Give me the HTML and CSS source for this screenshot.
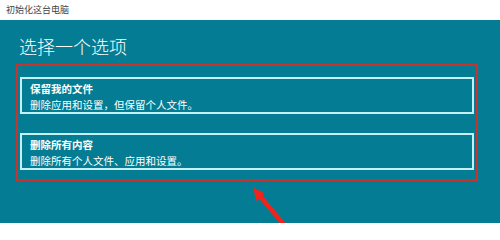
FILE: index.html
```html
<!DOCTYPE html>
<html lang="zh-CN">
<head>
<meta charset="utf-8">
<title>初始化这台电脑</title>
<link rel="stylesheet" href="styles.css">
</head>
<body>
<div class="window">
  <div class="titlebar">初始化这台电脑</div>
  <div class="main">
    <h1 class="heading">选择一个选项</h1>
    <div class="highlight">
      <div class="option">
        <div class="option-title">保留我的文件</div>
        <div class="option-desc">删除应用和设置，但保留个人文件。</div>
      </div>
      <div class="option">
        <div class="option-title">删除所有内容</div>
        <div class="option-desc">删除所有个人文件、应用和设置。</div>
      </div>
    </div>
    <svg class="arrow" width="60" height="50" viewBox="240 180 60 50" aria-hidden="true">
      <line x1="259" y1="195" x2="290" y2="232" stroke="#f2231b" stroke-width="4.5"/>
      <polygon points="253,187.5 265,193.5 256.5,201" fill="#f2231b"/>
    </svg>
  </div>
</div>
</body>
</html>
```
FILE: styles.css
```css
html, body {
  margin: 0;
  padding: 0;
}
body {
  width: 500px;
  height: 223px;
  overflow: hidden;
  font-family: "Noto Sans CJK SC", "Noto Sans", sans-serif;
}
.window {
  display: flex;
  flex-direction: column;
  height: 223px;
}
.titlebar {
  height: 20px;
  line-height: 20px;
  background: #ffffff;
  color: #444444;
  font-size: 9px;
  padding-left: 6px;
}
.main {
  position: relative;
  flex: 1;
  background: #047d94;
  padding: 14px 0 0 16px;
  color: #ffffff;
}
.heading {
  margin: 0 0 5px 3px;
  font-size: 18px;
  font-weight: 300;
  line-height: 25px;
  height: 25px;
}
.highlight {
  border: 2px solid #c8332c;
  padding: 11px 2px 9px 2px;
  box-sizing: content-box;
  width: 454px;
  display: flex;
  flex-direction: column;
  gap: 19px;
}
.option {
  border: 2px solid #c4f1f6;
  padding: 2px 8px 0 8px;
  font-size: 10.5px;
  line-height: 15.5px;
}
.option-title {
  font-weight: 700;
}
.option-desc {
  font-weight: 400;
}
.arrow {
  position: absolute;
  left: 240px;
  top: 160px;
}
```
